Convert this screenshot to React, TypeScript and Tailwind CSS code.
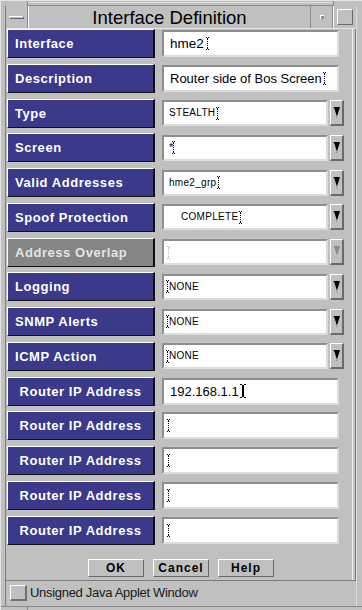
import React from "react";

const FONT = "font-['Liberation_Sans',Arial,sans-serif]";

function DotCursor({ className = "" }: { className?: string }) {
  const dots = [];
  for (let y = 2; y <= 10; y += 2) dots.push(<rect key={y} x={2} y={y} width={1} height={1} />);
  return (
    <svg width="5" height="13" viewBox="0 0 5 13" className={className} fill="#000">
      <rect x={1} y={0} width={1} height={1} />
      <rect x={3} y={0} width={1} height={1} />
      <rect x={2} y={1} width={1} height={1} />
      {dots}
      <rect x={2} y={11} width={1} height={1} />
      <rect x={1} y={12} width={1} height={1} />
      <rect x={3} y={12} width={1} height={1} />
    </svg>
  );
}

function SolidCursor() {
  return (
    <svg width="6" height="14" viewBox="0 0 6 14" fill="#000" className="ml-[1px]">
      <rect x={0} y={0} width={2} height={1} />
      <rect x={4} y={0} width={2} height={1} />
      <rect x={2} y={1} width={2} height={12} />
      <rect x={0} y={13} width={2} height={1} />
      <rect x={4} y={13} width={2} height={1} />
    </svg>
  );
}

function Arrow({ disabled }: { disabled?: boolean }) {
  return (
    <div className="w-[14px] h-[26px] ml-[2px] bg-[#c0c0c0] border-t border-l border-t-white border-l-white border-b-2 border-r-2 border-b-[#6a6a6a] border-r-[#6a6a6a] flex items-center justify-center">
      <svg width="7" height="11" viewBox="0 0 7 11">
        <polygon points="0,0 7,0 3.5,11" fill={disabled ? "#8a8a8a" : "#000"} />
        <line x1="0.5" y1="0.5" x2="3.5" y2="10" stroke={disabled ? "#e0e0e0" : "#ffffff"} strokeWidth="0.8" />
      </svg>
    </div>
  );
}

type RowProps = {
  label: string;
  kind: "text" | "select";
  disabled?: boolean;
  centered?: boolean;
  children?: React.ReactNode;
};

function Row({ label, kind, disabled, centered, children }: RowProps) {
  return (
    <div className="flex items-center h-[29px] ml-[1px]">
      <div
        className={`w-[148px] h-[29px] shrink-0 flex items-center border-t border-l border-t-white border-l-white border-b border-r-2 border-b-[#111] border-r-[#111] ${
          disabled ? "bg-[#858585] text-[#e4e4e4]" : "bg-[#3a398a] text-white"
        } ${centered ? "justify-center" : "pl-[7px]"}`}
      >
        <span className="text-[13px] font-bold tracking-[0.55px] leading-none">{label}</span>
      </div>
      <div className="ml-[7px] flex items-center">
        {kind === "text" ? (
          <div className="w-[177px] h-[27px] bg-white border-2 border-t-[#8e8e8e] border-l-[#8e8e8e] border-b-[#dcdcdc] border-r-[#dcdcdc] flex items-center pl-[6px] text-[13px] text-black leading-none">
            {children}
          </div>
        ) : (
          <>
            <div className="w-[166px] h-[26px] bg-white border-2 border-t-[#8e8e8e] border-l-[#8e8e8e] border-b-[#dcdcdc] border-r-[#dcdcdc] flex items-center text-[10px] text-black leading-none tracking-[0.3px]">
              {children}
            </div>
            <Arrow disabled={disabled} />
          </>
        )}
      </div>
    </div>
  );
}

function Btn({ children }: { children: React.ReactNode }) {
  return (
    <div className="w-[56px] h-[18px] border-t border-l border-t-white border-l-white border-b border-r border-b-[#6a6a6a] border-r-[#6a6a6a] flex items-center justify-center text-[12px] font-bold tracking-[1px] text-black leading-none">
      {children}
    </div>
  );
}

export default function App() {
  return (
    <div className={`w-[362px] h-[610px] bg-[#c0c0c0] ${FONT} flex flex-col border-t border-l border-t-[#e4e4e4] border-l-[#e4e4e4] overflow-hidden`}>
      <div className="h-[5px] flex shrink-0">
        <div className="w-[27px] border-r border-r-[#8a8a8a]" />
        <div className="flex-1 border-b border-b-[#8a8a8a] border-t border-t-[#dadada] mt-[1px]" />
        <div className="w-[29px] border-l border-l-[#8a8a8a]" />
      </div>
      <div className="flex flex-1">
        <div className="w-[4px] shrink-0" />
        <div className="flex-1 flex flex-col border-l border-l-[#7c7c7c]">
          <div className="h-[23px] flex shrink-0 border-b border-b-[#e6e6e6]">
            <div className="w-[22px] flex items-center justify-center border-r border-r-[#8a8a8a]">
              <div className="w-[15px] h-[3px] bg-[#c0c0c0] border-t border-t-white border-b border-b-[#6a6a6a] border-l border-l-white border-r border-r-[#6a6a6a]" />
            </div>
            <div className="flex-1 flex items-center justify-center pt-[3px] text-[18.5px] text-black leading-none border-l border-l-white">
              Interface Definition
            </div>
            <div className="w-[23px] flex items-center justify-center border-l border-l-[#8a8a8a] border-r border-r-[#8a8a8a]">
              <div className="w-[4px] h-[4px] bg-[#909090] border-t border-l border-white" />
            </div>
            <div className="w-[23px] flex items-center justify-center border-l border-l-white">
              <div className="w-[16px] h-[16px] border border-t-white border-l-white border-b-[#6a6a6a] border-r-[#6a6a6a]" />
            </div>
          </div>
          <div className="flex-1 flex">
            <div className="flex-1 flex flex-col">
              <div className="flex flex-col gap-[5.75px]">
                <Row label="Interface" kind="text">
                  <span className="text-[13.5px]">hme2</span>
                  <DotCursor className="ml-[1px]" />
                </Row>
                <Row label="Description" kind="text">
                  <span className="text-[13px]">Router side of Bos Screen</span>
                  <DotCursor />
                </Row>
                <Row label="Type" kind="select">
                  <span className="pl-[5px]">STEALTH</span>
                  <DotCursor />
                </Row>
                <Row label="Screen" kind="select">
                  <span className="pl-[5px] text-[11px]">*</span>
                  <DotCursor className="-ml-[3px]" />
                </Row>
                <Row label="Valid Addresses" kind="select">
                  <span className="pl-[5px]">hme2_grp</span>
                  <DotCursor />
                </Row>
                <Row label="Spoof Protection" kind="select">
                  <span className="pl-[17px]">COMPLETE</span>
                  <DotCursor />
                </Row>
                <Row label="Address Overlap" kind="select" disabled>
                  <span className="pl-[2px] opacity-25">
                    <DotCursor />
                  </span>
                </Row>
                <Row label="Logging" kind="select">
                  <DotCursor className="ml-[1px]" />
                  <span className="-ml-[1px]">NONE</span>
                </Row>
                <Row label="SNMP Alerts" kind="select">
                  <DotCursor className="ml-[1px]" />
                  <span className="-ml-[1px]">NONE</span>
                </Row>
                <Row label="ICMP Action" kind="select">
                  <DotCursor className="ml-[1px]" />
                  <span className="-ml-[1px]">NONE</span>
                </Row>
                <Row label="Router IP Address" kind="text" centered>
                  <span className="text-[13px]">192.168.1.1</span>
                  <SolidCursor />
                </Row>
                <Row label="Router IP Address" kind="text" centered>
                  <DotCursor className="-ml-[4px]" />
                </Row>
                <Row label="Router IP Address" kind="text" centered>
                  <DotCursor className="-ml-[4px]" />
                </Row>
                <Row label="Router IP Address" kind="text" centered>
                  <DotCursor className="-ml-[4px]" />
                </Row>
                <Row label="Router IP Address" kind="text" centered>
                  <DotCursor className="-ml-[4px]" />
                </Row>
              </div>
              <div className="mt-[14px] flex justify-center gap-[9px] ml-[7px]">
                <Btn>OK</Btn>
                <Btn>Cancel</Btn>
                <Btn>Help</Btn>
              </div>
            </div>
            <div className="w-[1px] bg-[#f0f0f0] ml-[3px]" />
            <div className="w-[2px]" />
            <div className="w-[1px] bg-[#7c7c7c]" />
          </div>
          <div className="h-[26px] shrink-0 border-t border-t-[#7c7c7c] flex items-start pt-[4px]">
            <div className="ml-[4px] w-[17px] h-[16px] bg-[#c0c0c0] border-t border-l border-t-white border-l-white border-b-2 border-r-2 border-b-[#707070] border-r-[#707070]" />
            <span className="ml-[3px] text-[13px] text-[#1a1a1a] tracking-[-0.3px] leading-[16px]">Unsigned Java Applet Window</span>
          </div>
        </div>
        <div className="w-[6px] shrink-0 border-l border-l-[#dcdcdc]" />
      </div>
      <div className="h-[4px] shrink-0 border-t border-t-[#8a8a8a] flex">
        <div className="w-[27px] border-r border-r-[#8a8a8a]" />
      </div>
    </div>
  );
}
